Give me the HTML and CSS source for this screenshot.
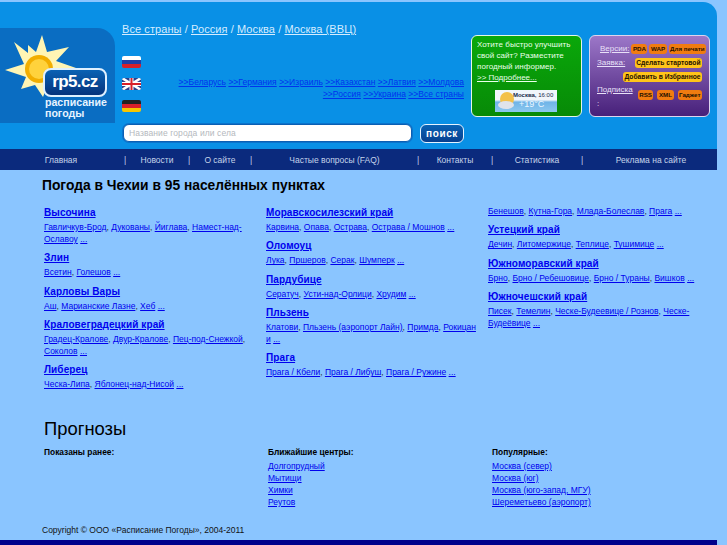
FILE: index.html
```html
<!DOCTYPE html>
<html lang="ru">
<head>
<meta charset="utf-8">
<title>Погода в Чехии</title>
<link rel="stylesheet" href="styles.css">
</head>
<body>
<header class="header">
  <div class="logo">
    <svg class="sun" width="115" height="95" viewBox="0 0 115 95">
      <polygon fill="#fff5b4" points="42,7 47,24 69,19 56,33 76,40 56,46 60,60 48,56 43,69 35,57 21,61 26,49 5,42 24,36 14,14 28,25 28,17 36,24"/>
      <circle cx="39" cy="41" r="14" fill="#f2ae00"/>
      <circle cx="39" cy="41" r="10" fill="#ffd23c"/>
    </svg>
    <div class="badge">rp5.cz</div>
    <div class="slogan">расписание<br>погоды</div>
  </div>
  <div class="middle">
    <div class="crumbs"><a href="#">Все страны</a> / <a href="#">Россия</a> / <a href="#">Москва</a> / <a href="#">Москва (ВВЦ)</a></div>
    <div class="langs">
      <div class="flags">
        <svg class="flag" width="19" height="12" viewBox="0 0 19 12"><rect width="19" height="4" fill="#fff"/><rect y="4" width="19" height="4" fill="#1f3fa8"/><rect y="8" width="19" height="4" fill="#d8202a"/></svg>
        <svg class="flag" width="19" height="12" viewBox="0 0 19 12"><rect width="19" height="12" fill="#2b3f8c"/><path d="M0 0L19 12M19 0L0 12" stroke="#fff" stroke-width="2.5"/><path d="M9.5 0V12M0 6H19" stroke="#fff" stroke-width="4"/><path d="M9.5 0V12M0 6H19" stroke="#d8202a" stroke-width="2"/></svg>
        <svg class="flag" width="19" height="12" viewBox="0 0 19 12"><rect width="19" height="4" fill="#222"/><rect y="4" width="19" height="4" fill="#d8202a"/><rect y="8" width="19" height="4" fill="#f7c600"/></svg>
      </div>
      <div class="countries">
        <a href="#">&gt;&gt;Беларусь</a> <a href="#">&gt;&gt;Германия</a> <a href="#">&gt;&gt;Израиль</a> <a href="#">&gt;&gt;Казахстан</a> <a href="#">&gt;&gt;Латвия</a> <a href="#">&gt;&gt;Молдова</a><br>
        <a href="#">&gt;&gt;Россия</a> <a href="#">&gt;&gt;Украина</a> <a href="#">&gt;&gt;Все страны</a>
      </div>
    </div>
    <form class="search">
      <input class="search-input" type="text" placeholder="Название города или села">
      <button class="search-btn" type="button">поиск</button>
    </form>
  </div>
  <aside class="informer">
    <p>Хотите быстро улучшить свой сайт? Разместите погодный информер.</p>
    <a href="#">&gt;&gt; Подробнее...</a>
    <div class="weather">
      <svg class="cloud" width="20" height="20" viewBox="0 0 20 20"><circle cx="11" cy="8" r="7" fill="#f3c14a"/><ellipse cx="10" cy="14" rx="8" ry="4" fill="#dfe3ea"/></svg>
      <div class="weather-text"><b>Москва,</b> 16:00<span class="temp">+19°C</span></div>
    </div>
  </aside>
  <aside class="tools">
    <div class="tool-row first"><a href="#">Версии:</a><span class="tag">PDA</span><span class="tag">WAP</span><span class="tag">Для печати</span></div>
    <div class="tool-row"><a href="#">Заявка:</a><span class="tag yellow">Сделать стартовой</span></div>
    <div class="tool-row end"><span class="tag yellow">Добавить в Избранное</span></div>
    <div class="tool-row sub"><a href="#">Подписка</a><span class="tag">RSS</span><span class="tag">XML</span><span class="tag">Гаджет</span></div>
    <div class="colon">:</div>
  </aside>
</header>
<nav class="nav">
  <a href="#">Главная</a><span>|</span><a href="#">Новости</a><span>|</span><a href="#">О сайте</a><span>|</span><a href="#">Частые вопросы (FAQ)</a><span>|</span><a href="#">Контакты</a><span>|</span><a href="#">Статистика</a><span>|</span><a href="#">Реклама на сайте</a>
</nav>
<main class="main">
  <h1>Погода в Чехии в 95 населённых пунктах</h1>
  <div class="regions">
    <div class="col">
      <h3><a href="#">Высочина</a></h3>
      <p><a href="#">Гавличкув-Брод</a>, <a href="#">Дукованы</a>, <a href="#">Йиглава</a>, <a href="#">Намест-над-Ославоу</a> <a href="#">...</a></p>
      <h3><a href="#">Злин</a></h3>
      <p><a href="#">Всетин</a>, <a href="#">Голешов</a> <a href="#">...</a></p>
      <h3><a href="#">Карловы Вары</a></h3>
      <p><a href="#">Аш</a>, <a href="#">Марианские Лазне</a>, <a href="#">Хеб</a> <a href="#">...</a></p>
      <h3><a href="#">Краловеградецкий край</a></h3>
      <p><a href="#">Градец-Кралове</a>, <a href="#">Двур-Кралове</a>, <a href="#">Пец-под-Снежкой</a>, <a href="#">Соколов</a> <a href="#">...</a></p>
      <h3><a href="#">Либерец</a></h3>
      <p><a href="#">Ческа-Липа</a>, <a href="#">Яблонец-над-Нисой</a> <a href="#">...</a></p>
    </div>
    <div class="col">
      <h3><a href="#">Моравскосилезский край</a></h3>
      <p><a href="#">Карвина</a>, <a href="#">Опава</a>, <a href="#">Острава</a>, <a href="#">Острава / Мошнов</a> <a href="#">...</a></p>
      <h3><a href="#">Оломоуц</a></h3>
      <p><a href="#">Лука</a>, <a href="#">Пршеров</a>, <a href="#">Серак</a>, <a href="#">Шумперк</a> <a href="#">...</a></p>
      <h3><a href="#">Пардубице</a></h3>
      <p><a href="#">Сератуч</a>, <a href="#">Усти-над-Орлици</a>, <a href="#">Хрудим</a> <a href="#">...</a></p>
      <h3><a href="#">Пльзень</a></h3>
      <p><a href="#">Клатови</a>, <a href="#">Пльзень (аэропорт Лайн)</a>, <a href="#">Примда</a>, <a href="#">Рокицан и</a> <a href="#">...</a></p>
      <h3><a href="#">Прага</a></h3>
      <p><a href="#">Прага / Кбели</a>, <a href="#">Прага / Либуш</a>, <a href="#">Прага / Ружине</a> <a href="#">...</a></p>
    </div>
    <div class="col">
      <p class="lead"><a href="#">Бенешов</a>, <a href="#">Кутна-Гора</a>, <a href="#">Млада-Болеслав</a>, <a href="#">Прага</a> <a href="#">...</a></p>
      <h3><a href="#">Устецкий край</a></h3>
      <p><a href="#">Дечин</a>, <a href="#">Литомержице</a>, <a href="#">Теплице</a>, <a href="#">Тушимице</a> <a href="#">...</a></p>
      <h3><a href="#">Южноморавский край</a></h3>
      <p><a href="#">Брно</a>, <a href="#">Брно / Ребешовице</a>, <a href="#">Брно / Тураны</a>, <a href="#">Вишков</a> <a href="#">...</a></p>
      <h3><a href="#">Южночешский край</a></h3>
      <p><a href="#">Писек</a>, <a href="#">Темелин</a>, <a href="#">Ческе-Будеевице / Рознов</a>, <a href="#">Ческе-Будеёвице</a> <a href="#">...</a></p>
    </div>
  </div>
  <h2>Прогнозы</h2>
  <div class="forecasts">
    <div class="fcol"><h4>Показаны ранее:</h4></div>
    <div class="fcol"><h4>Ближайшие центры:</h4>
      <a href="#">Долгопрудный</a><a href="#">Мытищи</a><a href="#">Химки</a><a href="#">Реутов</a></div>
    <div class="fcol"><h4>Популярные:</h4>
      <a href="#">Москва (север)</a><a href="#">Москва (юг)</a><a href="#">Москва (юго-запад, МГУ)</a><a href="#">Шереметьево (аэропорт)</a></div>
  </div>
  <div class="copy">Copyright © ООО «Расписание Погоды», 2004-2011</div>
</main>
<div class="bottom"></div>
</body>
</html>
```
FILE: styles.css
```css
* { box-sizing: border-box; }
html, body { margin: 0; height: 100%; }
body { background: #8ac5ff; font-family: "Liberation Sans", Arial, sans-serif; width: 727px; height: 545px; overflow: hidden; padding-top: 2px; color: #000; }
a { color: #0000ee; }

.header { width: 717px; height: 147px; background: #0990e6; border-top-right-radius: 14px; display: grid; grid-template-columns: 115px 342px 111px 121px; column-gap: 7px; }
.logo { margin-top: 26px; height: 95px; background: #0a6dc2; border-top-right-radius: 18px; position: relative; color: #fff; }
.sun { position: absolute; left: 0; top: 0; }
.badge { position: absolute; left: 43px; top: 40px; width: 64px; height: 29px; background: linear-gradient(#0a62b4, #06337c); border: 2px solid #dff0ff; border-radius: 8px; font-size: 17px; letter-spacing: -.6px; font-weight: bold; text-align: center; line-height: 24px; }
.slogan { position: absolute; left: 45px; top: 69px; font-size: 10.6px; font-weight: bold; line-height: 11px; color: #e6f3ff; }

.middle { display: flex; flex-direction: column; }
.crumbs { margin-top: 20px; height: 14px; font-size: 11px; line-height: 14px; letter-spacing: .08px; color: #d5ecff; white-space: nowrap; }
.crumbs a { color: #d5ecff; }
.langs { margin-top: 20px; display: flex; justify-content: space-between; }
.flags { display: flex; flex-direction: column; gap: 10px; }
.flag { display: block; border-radius: 2px; }
.countries { margin-top: 20px; text-align: right; font-size: 8.5px; line-height: 12px; white-space: nowrap; letter-spacing: .03px; }
.countries a { color: #0033ee; }
.search { margin-top: 12px; display: flex; gap: 8px; padding-left: 1px; }
.search-input { width: 289px; height: 18px; border: 1px solid #0a5fb4; border-radius: 6px; background: #fff; font: 8.5px "Liberation Sans", sans-serif; letter-spacing: .1px; padding: 0 5px; box-shadow: 0 0 0 1px #0b74cc; }
.search-input::placeholder { color: #b4b8bd; opacity: 1; }
.search-btn { width: 44px; height: 19px; border: 1px solid #e6f3ff; border-radius: 6px; background: linear-gradient(#0a62b4, #073f8f); color: #fff; font: bold 10px "Liberation Sans", sans-serif; letter-spacing: .6px; padding: 0; }

.informer { margin-top: 33px; height: 82px; background: linear-gradient(#0aa80a, #078a07); border: 1px solid #e6f6e6; border-radius: 6px; padding: 3px 4px 0 5px; font-size: 8px; line-height: 11px; color: #eaffea; display: flex; flex-direction: column; }
.informer p { margin: 0; letter-spacing: .05px; }
.informer a { color: #eaffea; }
.weather { margin: 7px 0 0 18px; width: 62px; height: 22px; background: linear-gradient(#f1f6fb 45%, #6fb4e8 55%, #8cc8ef); position: relative; font-size: 6px; line-height: 8px; color: #1a2a4a; padding: 1px 0 0 18px; white-space: nowrap; }
.cloud { position: absolute; left: 1px; top: 1px; }
.temp { display: block; color: #e9f6ff; font-size: 9px; line-height: 11px; padding-left: 6px; }

.tools { margin-top: 33px; height: 82px; background: linear-gradient(#9c77c8, #47207a); border: 1px solid #dcd4ee; border-radius: 6px; padding: 6px 7px 0 7px; font-size: 8px; line-height: 12px; color: #e8e0f8; }
.tools a { color: #e8e0f8; }
.tool-row { display: flex; align-items: center; gap: 2px; height: 14px; }
.tool-row a { margin-right: auto; }
.tool-row.first { padding-left: 3px; }
.tool-row.end { justify-content: flex-end; }
.tool-row.sub { align-items: flex-start; gap: 4px; }
.tool-row.sub .tag { margin-top: 6px; }
.tag { background: #f07c10; color: #241000; border-radius: 3px; font-size: 6.2px; line-height: 10px; height: 10px; padding: 0 1.5px; font-weight: bold; white-space: nowrap; }
.tag.yellow { background: #ffc41a; font-size: 6.7px; }
.colon { line-height: 12px; }

.nav { width: 717px; height: 21px; background: #0b2a7d; display: grid; grid-template-columns: 122px 6px 58px 6px 56px 6px 161px 6px 68px 6px 84px 6px 132px; align-items: center; text-align: center; font-size: 8.5px; color: #c5d4ea; }
.nav a { color: #c5d4ea; text-decoration: none; white-space: nowrap; }

.main { padding: 7px 0 0 42px; }
h1 { margin: 0; font-size: 13.8px; line-height: 18px; font-weight: bold; }
.regions { display: grid; grid-template-columns: 222px 222px 222px; margin: 10px 0 0 2px; height: 213px; }
.col { width: 214px; }
.col h3 { margin: 0 0 1px; font-size: 10px; line-height: 15px; letter-spacing: .1px; font-weight: bold; }
.col p { margin: 0 0 5.3px; font-size: 8.5px; line-height: 12px; color: #333; }
.col a { color: #0000ee; }
h2 { margin: 0 0 0 2px; font-size: 18.4px; line-height: 22px; font-weight: normal; }
.forecasts { display: grid; grid-template-columns: 224px 224px 200px; margin: 6px 0 0 2px; }
.fcol { display: flex; flex-direction: column; align-items: flex-start; font-size: 8.5px; line-height: 12px; }
.fcol h4 { margin: 0 0 2px; font-size: 8.4px; line-height: 12px; font-weight: bold; }
.copy { position: absolute; left: 42px; top: 524px; font-size: 8.5px; line-height: 12px; color: #111; }
.bottom { position: absolute; left: 0; top: 540px; width: 717px; height: 5px; background: #00008b; }
```
